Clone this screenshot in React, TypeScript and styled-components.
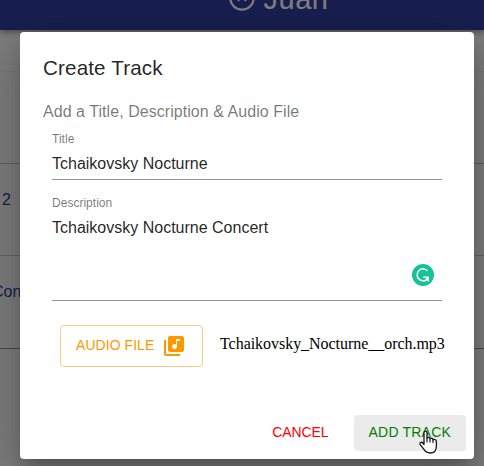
import React from 'react';
import styled, { createGlobalStyle } from 'styled-components';

const GlobalStyle = createGlobalStyle`
  *, *::before, *::after { box-sizing: border-box; }
  html, body { margin: 0; padding: 0; overflow: hidden; }
  body { font-family: 'Liberation Sans', Arial, sans-serif; }
`;

const Page = styled.div`
  position: relative;
  width: 484px;
  height: 466px;
  overflow: hidden;
  background: #fafafa;
`;

const AppBar = styled.header`
  position: relative;
  display: flex;
  justify-content: center;
  height: 30px;
  background: #303f9f;
  box-shadow: 0 2px 4px -1px rgba(0, 0, 0, 0.2), 0 4px 5px rgba(0, 0, 0, 0.14),
    0 1px 10px rgba(0, 0, 0, 0.12);
  color: #fff;
`;

const User = styled.div`
  display: flex;
  align-items: center;
  gap: 9px;
  height: 32px;
  margin: -18px 0 0 73px;
`;

const UserName = styled.span`
  padding-top: 2px;
  font-size: 29px;
  line-height: 32px;
  letter-spacing: 0.5px;
`;

const Row = styled.div<{ $height: number; $line: string }>`
  display: flex;
  align-items: center;
  height: ${(p) => p.$height}px;
  border-bottom: 1px solid ${(p) => p.$line};
  color: #303f9f;
  font-size: 16px;
`;

const RowText = styled.span<{ $indent: number }>`
  margin-left: ${(p) => p.$indent}px;
  padding-bottom: 20px;
`;

const Backdrop = styled.div`
  position: absolute;
  inset: 0;
  padding: 32px 10px 7px 20px;
  background: rgba(0, 0, 0, 0.5);
`;

const Dialog = styled.section`
  display: flex;
  flex-direction: column;
  width: 454px;
  height: 427px;
  border-radius: 4px;
  background: #fff;
  box-shadow: 0 11px 15px -7px rgba(0, 0, 0, 0.2), 0 24px 38px 3px rgba(0, 0, 0, 0.14),
    0 9px 46px 8px rgba(0, 0, 0, 0.12);
`;

const DialogTitle = styled.h2`
  margin: 0;
  padding: 20px 24px 0 23px;
  font-size: 20.6px;
  font-weight: 400;
  line-height: 32px;
  letter-spacing: 0.15px;
  color: rgba(0, 0, 0, 0.87);
`;

const DialogBody = styled.div`
  display: flex;
  flex: 1;
  flex-direction: column;
  padding: 16px 24px 0 23px;
`;

const Hint = styled.p`
  margin: 0 0 8px;
  font-size: 16px;
  line-height: 24px;
  letter-spacing: 0.05px;
  color: rgba(0, 0, 0, 0.54);
`;

const Field = styled.label<{ $height: number }>`
  display: flex;
  flex-direction: column;
  width: 390px;
  height: ${(p) => p.$height}px;
  margin-left: 9px;
  border-bottom: 1px solid #949494;
`;

const FieldLabel = styled.span`
  font-size: 12px;
  line-height: 14px;
  letter-spacing: 0.02px;
  color: rgba(0, 0, 0, 0.54);
`;

const FieldValue = styled.span`
  margin-top: 8px;
  font-size: 16px;
  line-height: 19px;
  color: rgba(0, 0, 0, 0.87);
`;

const Description = styled(Field)`
  margin-top: 16px;
`;

const Assistant = styled.span`
  display: flex;
  align-self: flex-end;
  margin: 27px 8px 0 0;
`;

const FileRow = styled.div`
  display: flex;
  align-items: center;
  gap: 17px;
  margin: 24px 0 0 17px;
`;

const FileButton = styled.button`
  display: flex;
  align-items: center;
  gap: 8px;
  width: 143px;
  height: 42px;
  padding: 0 15px;
  border: 1px solid #ffcb80;
  border-radius: 4px;
  background: #fff;
  color: #ff9800;
  font: 400 14px 'Liberation Sans', Arial, sans-serif;
  white-space: nowrap;

  svg {
    flex: none;
  }
`;

const ButtonText = styled.span<{ $spacing: number }>`
  padding-bottom: 2px;
  letter-spacing: ${(p) => p.$spacing}px;
`;

const FileName = styled.span`
  padding-bottom: 5px;
  font-family: 'Liberation Serif', 'Times New Roman', serif;
  font-size: 16px;
  letter-spacing: -0.04px;
  color: #000;
`;

const Actions = styled.footer`
  display: flex;
  justify-content: flex-end;
  gap: 10px;
  padding: 8px;
`;

const ActionButton = styled.button<{ $tone: string; $hovered?: boolean }>`
  position: relative;
  display: flex;
  align-items: center;
  height: 36px;
  padding: 0 15px;
  border: 0;
  border-radius: 4px;
  background: ${(p) => (p.$hovered ? '#ebebeb' : 'transparent')};
  color: ${(p) => p.$tone};
  font: 400 14px 'Liberation Sans', Arial, sans-serif;
  white-space: nowrap;
`;

const Pointer = styled.svg`
  position: absolute;
  left: 65px;
  top: 15px;
`;

const FaceIcon = () => (
  <svg width="26" height="26" viewBox="0 0 26 26" fill="none" stroke="#fff">
    <circle cx="13" cy="13" r="11.7" strokeWidth="2.2" />
    <path d="M8.6 15.4h2M15.4 15.4h2" strokeWidth="1.6" />
  </svg>
);

const LibraryMusicIcon = () => (
  <svg width="24" height="24" viewBox="0 0 24 24" fill="currentColor">
    <path d="M20 2H8c-1.1 0-2 .9-2 2v12c0 1.1.9 2 2 2h12c1.1 0 2-.9 2-2V4c0-1.1-.9-2-2-2zm-2 5h-3v5.5c0 1.38-1.12 2.5-2.5 2.5S10 13.88 10 12.5s1.12-2.5 2.5-2.5c.57 0 1.08.19 1.5.51V5h4v2zM4 6H2v14c0 1.1.9 2 2 2h14v-2H4V6z" />
  </svg>
);

const AssistantIcon = () => (
  <svg width="22" height="22" viewBox="0 0 22 22" fill="none">
    <circle cx="11" cy="11" r="11" fill="#15c39a" />
    <path d="M15.6 6.8A6 6 0 1 0 14.6 15.8" stroke="#fff" strokeWidth="1.5" />
    <path d="M11.3 13.2H16.2V17.6M16.2 13.2L13.4 16.6" stroke="#fff" strokeWidth="1.5" />
  </svg>
);

export default function App() {
  return (
    <Page>
      <GlobalStyle />
      <AppBar>
        <User>
          <FaceIcon />
          <UserName>Juan</UserName>
        </User>
      </AppBar>
      <Row $height={42} $line="#f0f0f0" />
      <Row $height={92} $line="#c0c0c0" />
      <Row $height={92} $line="#c8c8c8">
        <RowText $indent={2}>2</RowText>
      </Row>
      <Row $height={93} $line="#949494">
        <RowText $indent={-8}>Concert</RowText>
      </Row>
      <Backdrop>
        <Dialog role="dialog" aria-label="Create Track">
          <DialogTitle>Create Track</DialogTitle>
          <DialogBody>
            <Hint>Add a Title, Description &amp; Audio File</Hint>
            <Field $height={48}>
              <FieldLabel>Title</FieldLabel>
              <FieldValue>Tchaikovsky Nocturne</FieldValue>
            </Field>
            <Description $height={105}>
              <FieldLabel>Description</FieldLabel>
              <FieldValue>Tchaikovsky Nocturne Concert</FieldValue>
              <Assistant>
                <AssistantIcon />
              </Assistant>
            </Description>
            <FileRow>
              <FileButton type="button">
                <ButtonText $spacing={0.05}>AUDIO FILE</ButtonText>
                <LibraryMusicIcon />
              </FileButton>
              <FileName>Tchaikovsky_Nocturne__orch.mp3</FileName>
            </FileRow>
          </DialogBody>
          <Actions>
            <ActionButton type="button" $tone="#ff0000">
              <ButtonText $spacing={-0.1}>CANCEL</ButtonText>
            </ActionButton>
            <ActionButton type="button" $tone="#008000" $hovered>
              <ButtonText $spacing={0.2}>ADD TRACK</ButtonText>
              <Pointer width="19" height="24" viewBox="0 0 19 24">
                <path
                  d="M5 14.5V2.7C5 .5 8 .5 8 2.7V8.2C8.7 6.9 11 7.2 11 8.8C11.8 7.7 14 8.1 14 9.8C15.2 8.9 17.4 9.5 17.4 11.6V16C17.4 20.5 15 23 11.2 23C7.8 23 6 21.4 4.4 18.7L1.2 14.6C.2 12.8 2.4 11.4 3.8 13Z"
                  fill="#fff"
                  stroke="#161622"
                  strokeWidth="1.3"
                  strokeLinejoin="round"
                />
                <path d="M8 7.8V12.5M11 8.8V12.5M14 9.8V13" stroke="#161622" strokeWidth="1.2" />
              </Pointer>
            </ActionButton>
          </Actions>
        </Dialog>
      </Backdrop>
    </Page>
  );
}
